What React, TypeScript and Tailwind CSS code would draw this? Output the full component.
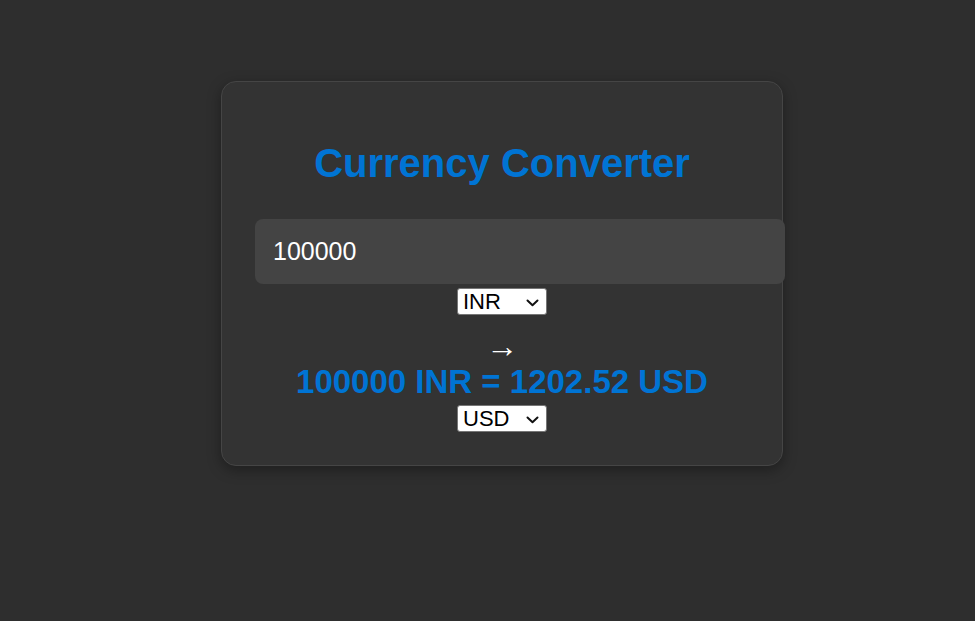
import React, { useState } from "react";

function Select({ value, onChange, options }: { value: string; onChange: (v: string) => void; options: string[] }) {
  return (
    <div className="relative mx-auto w-[90px] h-[27px]">
      <select
        value={value}
        onChange={(e) => onChange(e.target.value)}
        className="appearance-none w-[90px] h-[27px] bg-white text-black text-[22px] leading-[25px] pl-[5px] pr-[20px] border border-[#767676] rounded-[3px] outline-none"
        style={{ fontFamily: '"Liberation Sans", Arial, sans-serif' }}
      >
        {options.map((o) => (
          <option key={o} value={o}>
            {o}
          </option>
        ))}
      </select>
      <svg
        className="pointer-events-none absolute left-[69px] top-[11px]"
        width="13"
        height="8"
        viewBox="0 0 13 8"
        fill="none"
      >
        <path d="M1.5 1.5 L6.5 6.2 L11.5 1.5" stroke="#111" strokeWidth="2" strokeLinecap="round" strokeLinejoin="round" />
      </svg>
    </div>
  );
}

export default function App() {
  const [amount, setAmount] = useState("100000");
  const [from, setFrom] = useState("INR");
  const [to, setTo] = useState("USD");
  return (
    <div
      className="min-h-[621px] w-full bg-[#2e2e2e] pt-[81px] overflow-hidden"
      style={{ fontFamily: '"Liberation Sans", Arial, sans-serif' }}
    >
      <div className="ml-[221px] w-[562px] bg-[#333333] border border-[#454545] rounded-[15px] shadow-[0_4px_14px_rgba(0,0,0,0.35)] pt-[58px] pb-[33px] px-[33px] text-center">
        <h1 className="text-[40px] leading-[46px] font-bold text-[#0074d4]">Currency Converter</h1>
        <input
          value={amount}
          onChange={(e) => setAmount(e.target.value)}
          className="block mt-[33px] w-[530px] h-[65px] bg-[#444444] text-white text-[25px] pl-[18px] rounded-[8px] outline-none border-0"
          style={{ fontFamily: '"Liberation Sans", Arial, sans-serif' }}
        />
        <div className="mt-[4px]">
          <Select value={from} onChange={setFrom} options={["INR", "USD", "EUR", "GBP"]} />
        </div>
        <div className="mt-[13px] text-white text-[32px] leading-[36px]">→</div>
        <div className="text-[33px] leading-[36px] font-bold text-[#0074d4]">
          {amount} {from} = 1202.52 {to}
        </div>
        <div className="mt-[5px]">
          <Select value={to} onChange={setTo} options={["USD", "INR", "EUR", "GBP"]} />
        </div>
      </div>
    </div>
  );
}
